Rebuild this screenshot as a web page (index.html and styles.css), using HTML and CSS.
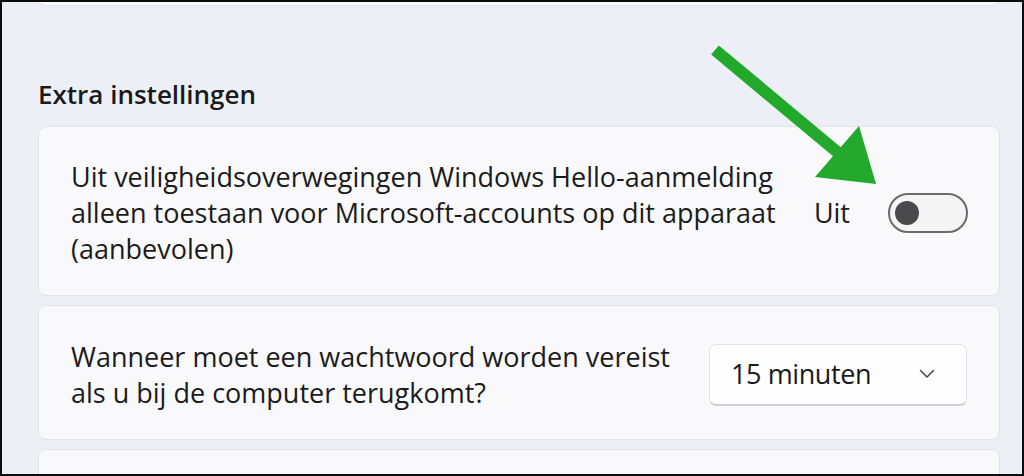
FILE: index.html
```html
<!DOCTYPE html>
<html lang="nl">
<head>
<meta charset="utf-8">
<title>Extra instellingen</title>
<link rel="stylesheet" href="styles.css">
</head>
<body>
<div class="frame">
  <div class="card card-top"></div>
  <h2 class="section-title">Extra instellingen</h2>
  <div class="card card-hello">
    <div class="label">Uit veiligheidsoverwegingen Windows Hello-aanmelding<br>alleen toestaan voor Microsoft-accounts op dit apparaat<br>(aanbevolen)</div>
    <div class="control">
      <span class="state">Uit</span>
      <span class="toggle"><span class="knob"></span></span>
    </div>
  </div>
  <div class="card card-pw">
    <div class="label">Wanneer moet een wachtwoord worden vereist<br>als u bij de computer terugkomt?</div>
    <div class="dropdown">
      <span class="dd-text">15 minuten</span>
      <svg class="chev" width="16" height="10" viewBox="0 0 16 10"><path d="M1.5 1.5 L8 8 L14.5 1.5" fill="none" stroke="#4a4a4a" stroke-width="1.6" stroke-linecap="round" stroke-linejoin="round"/></svg>
    </div>
  </div>
  <div class="card card-bottom"></div>
  <svg class="arrow" width="1024" height="476" viewBox="0 0 1024 476">
    <line x1="715" y1="50" x2="842" y2="156" stroke="#22a82a" stroke-width="12" stroke-linecap="butt"/>
    <polygon points="876,184 815,177 859,126" fill="#22a82a"/>
  </svg>
</div>
</body>
</html>
```
FILE: styles.css
```css
html, body {
  margin: 0;
  padding: 0;
  background: #000;
}
.frame {
  position: relative;
  width: 1024px;
  height: 476px;
  box-sizing: border-box;
  border: 2px solid #0b0b0b;
  background: #ecf0f6;
  overflow: hidden;
  padding: 0 22px 0 36px;
  font-family: "Open Sans", "Noto Sans", sans-serif;
  color: #1b1b1b;
  display: flex;
  flex-direction: column;
}
.frame > * {
  flex-shrink: 0;
}
.card {
  background: #f9f9fb;
  border: 1px solid #e2e3e7;
  border-radius: 8px;
  box-sizing: border-box;
}
.card-top {
  height: 40px;
  margin-top: -36px;
  background: #fbfbfc;
}
.section-title {
  margin: 72px 0 0 0;
  font-size: 26px;
  font-weight: 600;
  line-height: 32px;
  height: 48px;
  color: #1a1a1a;
}
.card-hello {
  height: 170px;
  display: flex;
  align-items: center;
  justify-content: space-between;
  padding: 3px 31px 0 32px;
}
.label {
  font-size: 27px;
  line-height: 36px;
}
.control {
  display: flex;
  align-items: center;
  gap: 38px;
}
.state {
  font-size: 27px;
  line-height: 36px;
}
.toggle {
  width: 80px;
  height: 40px;
  box-sizing: border-box;
  border: 2px solid #6a6a6a;
  border-radius: 20px;
  background: #f4f4f5;
  display: flex;
  align-items: center;
  padding-left: 5px;
}
.knob {
  width: 24px;
  height: 24px;
  border-radius: 50%;
  background: #4a4a4c;
}
.card-pw {
  margin-top: 9px;
  height: 135px;
  display: flex;
  align-items: center;
  justify-content: space-between;
  padding: 4px 32px 0 32px;
}
.dropdown {
  width: 258px;
  height: 62px;
  box-sizing: border-box;
  background: #fefefe;
  border: 1px solid #e3e3e3;
  border-bottom: 2px solid #cfcfd2;
  border-radius: 7px;
  display: flex;
  align-items: center;
  justify-content: space-between;
  padding: 0 31px 0 21px;
}
.dd-text {
  font-size: 27px;
  line-height: 36px;
  letter-spacing: -0.4px;
}
.chev {
  display: block;
}
.card-bottom {
  margin-top: 9px;
  height: 60px;
}
.arrow {
  position: absolute;
  left: -2px;
  top: -2px;
  pointer-events: none;
}
```
